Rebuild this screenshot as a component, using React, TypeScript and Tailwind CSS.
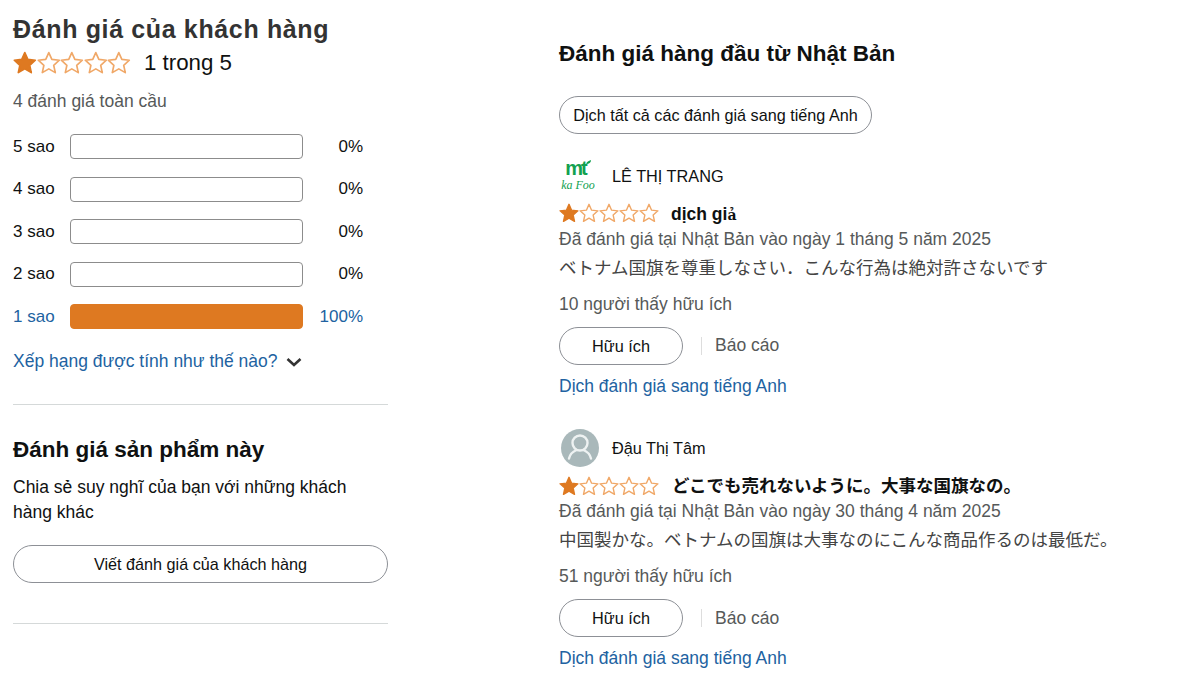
const FONT = "font-['Liberation_Sans','Noto_Sans_CJK_JP',sans-serif]";
const STAR =
  "M12 1.6 L15.1 8.6 L22.7 9.4 L17 14.5 L18.6 22 L12 18.2 L5.4 22 L7 14.5 L1.3 9.4 L8.9 8.6 Z";

function Stars({ size }: { size: "lg" | "sm" }) {
  const box = size === "lg" ? "w-[23.6px] h-[23.6px]" : "w-[20px] h-[20px]";
  return (
    <div className="flex shrink-0">
      {[0, 1, 2, 3, 4].map((i) => (
        <svg key={i} viewBox="0 0 24 24" className={box}>
          <path
            d={STAR}
            fill={i === 0 ? "#de7921" : "#fff"}
            stroke={i === 0 ? "#de7921" : "#f0a868"}
            strokeWidth={1.7}
            strokeLinejoin="round"
          />
        </svg>
      ))}
    </div>
  );
}

function Bar({ label, pct, active }: { label: string; pct: string; active?: boolean }) {
  return (
    <div className={`flex items-center h-[25px] text-[17px] ${active ? "text-[#2162a1]" : "text-[#0f1111]"}`}>
      <span className="w-[57px]">{label}</span>
      <div
        className={`w-[233px] h-[25px] rounded-[4px] border ${
          active ? "bg-[#de7921] border-[#de7921]" : "bg-white border-[#8c8c8c]"
        }`}
      />
      <span className="w-[60px] text-right">{pct}</span>
    </div>
  );
}

function Review({
  avatar,
  name,
  title,
  date,
  body,
  helpful,
  titleGap,
}: {
  avatar: React.ReactNode;
  name: string;
  title: React.ReactNode;
  date: string;
  body: string;
  helpful: string;
  titleGap: string;
}) {
  return (
    <div>
      <div className="flex items-center h-[38px]">
        <div className="w-[40px] h-[38px] shrink-0">{avatar}</div>
        <span className="ml-[13px] text-[16.3px] text-[#0f1111]">{name}</span>
      </div>
      <div className="flex items-center h-[20px] mt-[8px]">
        <Stars size="sm" />
        <span className={`${titleGap} pt-[2px] text-[17.5px] font-bold text-[#0f1111]`}>{title}</span>
      </div>
      <p className="text-[17.5px] leading-[24px] mt-[3.5px] text-[#565959]">{date}</p>
      <p className="text-[17.5px] leading-[24px] mt-[5px] text-[#444]">{body}</p>
      <p className="text-[17.5px] leading-[24px] mt-[12px] text-[#565959]">{helpful}</p>
      <div className="flex items-center mt-[11px]">
        <button className="w-[124px] h-[38px] pt-px rounded-full border border-[#8d9096] bg-white text-[16.3px] text-[#0f1111]">
          Hữu ích
        </button>
        <span className="ml-[18px] h-[18px] border-l border-[#ddd]" />
        <span className="ml-[13px] text-[17.5px] text-[#565959]">Báo cáo</span>
      </div>
      <a className="block mt-[9px] text-[17.5px] leading-[24px] text-[#2162a1]">Dịch đánh giá sang tiếng Anh</a>
    </div>
  );
}

export default function App() {
  return (
    <div className={`${FONT} flex w-[1188px] h-[696px] overflow-hidden bg-white`}>
      <div className="w-[375px] ml-[13px] shrink-0">
        <h2 className="mt-[14px] text-[25px] leading-[30px] font-bold tracking-[0.64px] text-[#333]">
          Đánh giá của khách hàng
        </h2>
        <div className="flex items-center mt-[3px] h-[32px]">
          <Stars size="lg" />
          <span className="ml-[13px] text-[22.3px] text-[#0f1111]">1 trong 5</span>
        </div>
        <p className="mt-[10px] text-[17.5px] leading-[24px] text-[#565959]">4 đánh giá toàn cầu</p>
        <div className="mt-[21px] flex flex-col gap-[17.5px] w-[350px]">
          <Bar label="5 sao" pct="0%" />
          <Bar label="4 sao" pct="0%" />
          <Bar label="3 sao" pct="0%" />
          <Bar label="2 sao" pct="0%" />
          <Bar label="1 sao" pct="100%" active />
        </div>
        <div className="flex items-center mt-[20px] h-[24px]">
          <span className="text-[17.5px] text-[#2162a1]">Xếp hạng được tính như thế nào?</span>
          <svg viewBox="0 0 16 12" className="ml-[8px] w-[16px] h-[12px] mt-[2px]">
            <path d="M1.5 3 L8 9 L14.5 3" fill="none" stroke="#333" strokeWidth={2.6} />
          </svg>
        </div>
        <div className="mt-[31px] border-t border-[#d5d9d9]" />
        <h3 className="mt-[31px] text-[22.5px] leading-[28px] font-bold text-[#0f1111]">Đánh giá sản phẩm này</h3>
        <p className="mt-[11px] text-[17.5px] leading-[25px] text-[#0f1111] w-[350px]">
          Chia sẻ suy nghĩ của bạn với những khách hàng khác
        </p>
        <button className="mt-[20px] w-full h-[38px] rounded-full border border-[#8d9096] bg-white text-[16.2px] text-[#0f1111]">
          Viết đánh giá của khách hàng
        </button>
        <div className="mt-[40px] border-t border-[#d5d9d9]" />
      </div>
      <div className="ml-[171px] flex-1 pt-[40px]">
        <h3 className="text-[22.5px] leading-[28px] font-bold text-[#0f1111]">Đánh giá hàng đầu từ Nhật Bản</h3>
        <button className="block mt-[28px] w-[313px] h-[38px] pt-px rounded-full border border-[#8d9096] bg-white text-[16.2px] text-[#0f1111]">
          Dịch tất cả các đánh giá sang tiếng Anh
        </button>
        <div className="mt-[23px]">
          <Review
            avatar={
              <div className="flex flex-col items-center w-[38px] h-[38px]">
                <div className="flex items-start h-[21px] mt-px">
                  <span className="text-[20px] leading-[20px] font-bold tracking-[-2px] text-[#12a150]">mt</span>
                  <svg viewBox="0 0 6 6" className="w-[5px] h-[5px] mt-[2px]">
                    <path d="M0 5 C1 2 3 1 6 0 C6 3 4 5 0 5 Z" fill="#12a150" />
                  </svg>
                </div>
                <span className="text-[12px] leading-[12px] whitespace-nowrap italic text-[#12a150] font-['Liberation_Serif',serif]">ka Foo</span>
              </div>
            }
            name="LÊ THỊ TRANG"
            title={
              <>
                dịch gi<span className="font-['DejaVu_Serif',serif] text-[14px]">ả</span>
              </>
            }
            titleGap="ml-[12px]"
            date="Đã đánh giá tại Nhật Bản vào ngày 1 tháng 5 năm 2025"
            body="ベトナム国旗を尊重しなさい．こんな行為は絶対許さないです"
            helpful="10 người thấy hữu ích"
          />
        </div>
        <div className="mt-[32px]">
          <Review
            avatar={
              <svg viewBox="0 0 38 38" className="w-[38px] h-[38px] ml-[2px] -mt-px">
                <circle cx="19" cy="19" r="19" fill="#a9b8ba" />
                <circle cx="19" cy="14" r="7.5" fill="none" stroke="#eef2f2" strokeWidth={2.4} />
                <path d="M8 29.5 C9 25 12 22.5 15.5 21 M30 29.5 C29 25 26 22.5 22.5 21" fill="none" stroke="#eef2f2" strokeWidth={2.4} strokeLinecap="round" />
              </svg>
            }
            name="Đậu Thị Tâm"
            title="どこでも売れないように。大事な国旗なの。"
            titleGap="ml-[13px]"
            date="Đã đánh giá tại Nhật Bản vào ngày 30 tháng 4 năm 2025"
            body="中国製かな。ベトナムの国旗は大事なのにこんな商品作るのは最低だ。"
            helpful="51 người thấy hữu ích"
          />
        </div>
      </div>
    </div>
  );
}
